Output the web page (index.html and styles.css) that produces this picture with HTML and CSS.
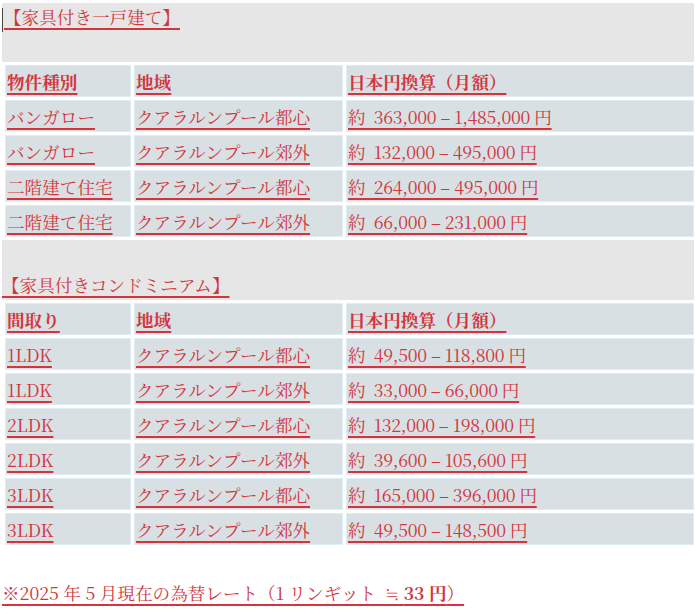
FILE: index.html
```html
<!DOCTYPE html>
<html lang="ja">
<head>
<meta charset="utf-8">
<link rel="stylesheet" href="styles.css">
</head>
<body>
<div class="page">
  <div class="band band-top">
    <div class="line"><span class="caret"></span><span class="u">【家具付き一戸建て】</span></div>
    <div class="line">&nbsp;</div>
  </div>
  <table class="grid">
    <colgroup><col class="c1"><col class="c2"><col class="c3"></colgroup>
    <tr class="head"><td><span class="u">物件種別</span></td><td><span class="u">地域</span></td><td><span class="u">日本円換算（月額）</span></td></tr>
    <tr><td><span class="u">バンガロー</span></td><td><span class="u">クアラルンプール都心</span></td><td class="amt"><span class="u">約&nbsp; 363,000 – 1,485,000 円</span></td></tr>
    <tr><td><span class="u">バンガロー</span></td><td><span class="u">クアラルンプール郊外</span></td><td class="amt"><span class="u">約&nbsp; 132,000 – 495,000 円</span></td></tr>
    <tr><td><span class="u">二階建て住宅</span></td><td><span class="u">クアラルンプール都心</span></td><td class="amt"><span class="u">約&nbsp; 264,000 – 495,000 円</span></td></tr>
    <tr><td><span class="u">二階建て住宅</span></td><td><span class="u">クアラルンプール郊外</span></td><td class="amt"><span class="u">約&nbsp; 66,000 – 231,000 円</span></td></tr>
  </table>
  <div class="band band-second">
    <div class="line">&nbsp;</div>
    <div class="line"><span class="u">【家具付きコンドミニアム】</span></div>
  </div>
  <table class="grid">
    <colgroup><col class="c1"><col class="c2"><col class="c3"></colgroup>
    <tr class="head"><td><span class="u">間取り</span></td><td><span class="u">地域</span></td><td><span class="u">日本円換算（月額）</span></td></tr>
    <tr><td><span class="u">1LDK</span></td><td><span class="u">クアラルンプール都心</span></td><td class="amt"><span class="u">約&nbsp; 49,500 – 118,800 円</span></td></tr>
    <tr><td><span class="u">1LDK</span></td><td><span class="u">クアラルンプール郊外</span></td><td class="amt"><span class="u">約&nbsp; 33,000 – 66,000 円</span></td></tr>
    <tr><td><span class="u">2LDK</span></td><td><span class="u">クアラルンプール都心</span></td><td class="amt"><span class="u">約&nbsp; 132,000 – 198,000 円</span></td></tr>
    <tr><td><span class="u">2LDK</span></td><td><span class="u">クアラルンプール郊外</span></td><td class="amt"><span class="u">約&nbsp; 39,600 – 105,600 円</span></td></tr>
    <tr><td><span class="u">3LDK</span></td><td><span class="u">クアラルンプール都心</span></td><td class="amt"><span class="u">約&nbsp; 165,000 – 396,000 円</span></td></tr>
    <tr><td><span class="u">3LDK</span></td><td><span class="u">クアラルンプール郊外</span></td><td class="amt"><span class="u">約&nbsp; 49,500 – 148,500 円</span></td></tr>
  </table>
  <p class="note"><span class="u">※2025 年 5 月現在の為替レート（1 リンギット&nbsp; ≒ <b>33 円</b>）</span></p>
</div>
</body>
</html>
```

FILE: styles.css
```css
html, body {
  margin: 0;
  padding: 0;
  background: #ffffff;
}
body {
  font-family: "Noto Serif CJK JP", serif;
  font-size: 17.6px;
  color: #d2363c;
}
.page {
  padding: 3px 0 0 2px;
  width: 695px;
  box-sizing: border-box;
}
.band {
  background: #e6e6e6;
  width: 692px;
}
.band-top .line {
  height: 29.5px;
  line-height: 28px;
}
.band-second .line {
  height: 30px;
  line-height: 30px;
}
.line {
  white-space: nowrap;
}
.band-top .line:first-child {
  display: flex;
  align-items: flex-start;
}
.caret {
  display: inline-block;
  width: 1px;
  height: 24px;
  margin-top: 5px;
  background: #444;
  margin-right: 1px;
}
.u {
  text-decoration: underline;
  text-decoration-color: #d2363c;
  text-decoration-thickness: 2px;
  text-underline-offset: 4px;
}
.grid {
  border-collapse: separate;
  border-spacing: 3px;
  table-layout: fixed;
  width: 695px;
}
.c1 { width: 126px; }
.c2 { width: 209px; }
.c3 { width: 348px; }
.grid td {
  background: #d9e0e4;
  border: 1px solid #e1edf5;
  height: 32px;
  box-sizing: border-box;
  padding: 2px 1px 0 1px;
  vertical-align: middle;
  white-space: nowrap;
  overflow: hidden;
  line-height: 28px;
}
.grid td.amt {
  letter-spacing: -0.3px;
}
.head td {
  font-weight: bold;
}
.note {
  margin: 30px 0 0 0;
  line-height: 30px;
}
.note b {
  font-weight: bold;
}
```
